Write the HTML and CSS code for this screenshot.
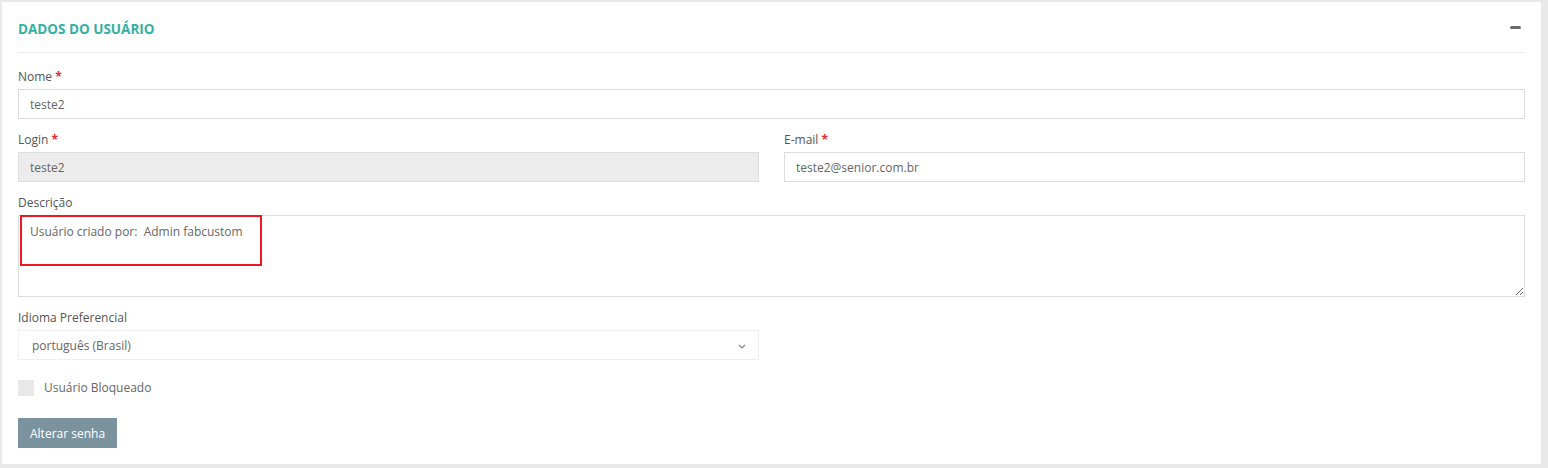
FILE: index.html
```html
<!DOCTYPE html>
<html lang="pt-BR">
<head>
<meta charset="utf-8">
<title>Dados do usuário</title>
<link rel="stylesheet" href="styles.css">
</head>
<body>
<section class="panel">
  <header class="panel-header">
    <h2 class="panel-title">DADOS DO USUÁRIO</h2>
    <span class="collapse-icon" aria-label="Recolher"></span>
  </header>
  <div class="form">
    <div class="field">
      <label class="label">Nome <span class="req">*</span></label>
      <div class="input">teste2</div>
    </div>
    <div class="row">
      <div class="field">
        <label class="label">Login <span class="req">*</span></label>
        <div class="input disabled">teste2</div>
      </div>
      <div class="field">
        <label class="label">E-mail <span class="req">*</span></label>
        <div class="input">teste2@senior.com.br</div>
      </div>
    </div>
    <div class="field">
      <label class="label">Descrição</label>
      <div class="textarea-wrap">
        <textarea class="textarea">Usuário criado por:  Admin fabcustom</textarea>
        <span class="highlight"></span>
      </div>
    </div>
    <div class="row">
      <div class="field">
        <label class="label">Idioma Preferencial</label>
        <div class="select">
          <span>português (Brasil)</span>
          <svg class="chevron" width="8" height="5" viewBox="0 0 8 5"><path d="M1 1l3 3 3-3" fill="none" stroke="#888" stroke-width="1.2"/></svg>
        </div>
      </div>
      <div class="field"></div>
    </div>
    <div class="check-row">
      <span class="checkbox"></span>
      <span class="check-label">Usuário Bloqueado</span>
    </div>
    <div class="actions">
      <button class="btn">Alterar senha</button>
    </div>
  </div>
</section>
</body>
</html>
```
FILE: styles.css
```css
html, body {
  margin: 0;
  padding: 0;
}
body {
  background: #e9e9e9;
  font-family: "Open Sans", "Noto Sans", sans-serif;
  font-size: 12px;
  color: #555;
}
.panel {
  background: #fff;
  margin: 2px 7px 0 2px;
  height: 462px;
  box-sizing: border-box;
  padding: 0 16px;
}
.panel-header {
  display: flex;
  align-items: center;
  justify-content: space-between;
  padding: 18px 4px 14px 0;
  border-bottom: 1px solid #ececec;
}
.panel-title {
  margin: 0;
  font-size: 13.5px;
  line-height: 18px;
  font-weight: 700;
  color: #35b0a2;
}
.collapse-icon {
  width: 11px;
  height: 3px;
  border-radius: 2px;
  background: #6b6b6b;
  margin-top: -3px;
}
.form {
  padding-top: 15px;
  display: flex;
  flex-direction: column;
  gap: 12px;
}
.row {
  display: flex;
  gap: 25px;
}
.row > .field {
  flex: 1;
}
.field {
  display: flex;
  flex-direction: column;
  gap: 4px;
}
.label {
  line-height: 17px;
  color: #555;
}
.req {
  color: #e52b2b;
  font-weight: 700;
}
.input, .select {
  box-sizing: border-box;
  height: 30px;
  border: 1px solid #dcdcdc;
  padding: 0 11px;
  display: flex;
  align-items: center;
  color: #666;
  background: #fff;
}
.input.disabled {
  background: #ececec;
  border-color: #dedede;
}
.select {
  border-color: #efefef;
  justify-content: space-between;
  padding: 0 12px 0 13px;
}
.chevron {
  margin-top: 2px;
}
.textarea-wrap {
  position: relative;
}
.textarea {
  display: block;
  box-sizing: border-box;
  width: 100%;
  height: 82px;
  margin: 0;
  border: 1px solid #dcdcdc;
  padding: 7px 11px;
  font-family: inherit;
  font-size: 12px;
  line-height: 17px;
  color: #666;
  resize: vertical;
  outline: none;
}
.highlight {
  position: absolute;
  left: 2px;
  top: 0;
  width: 242px;
  height: 51px;
  box-sizing: border-box;
  border: 2px solid #f01820;
  pointer-events: none;
}
.check-row {
  display: flex;
  align-items: center;
  gap: 10px;
  margin-top: 7px;
}
.checkbox {
  width: 16px;
  height: 16px;
  background: #e8e8e8;
}
.check-label {
  font-size: 12px;
  color: #666;
}
.actions {
  margin-top: 10px;
}
.btn {
  height: 30px;
  padding: 0 12px;
  border: 0;
  background: #7a939f;
  color: #fff;
  font-family: inherit;
  font-size: 12px;
}
```
